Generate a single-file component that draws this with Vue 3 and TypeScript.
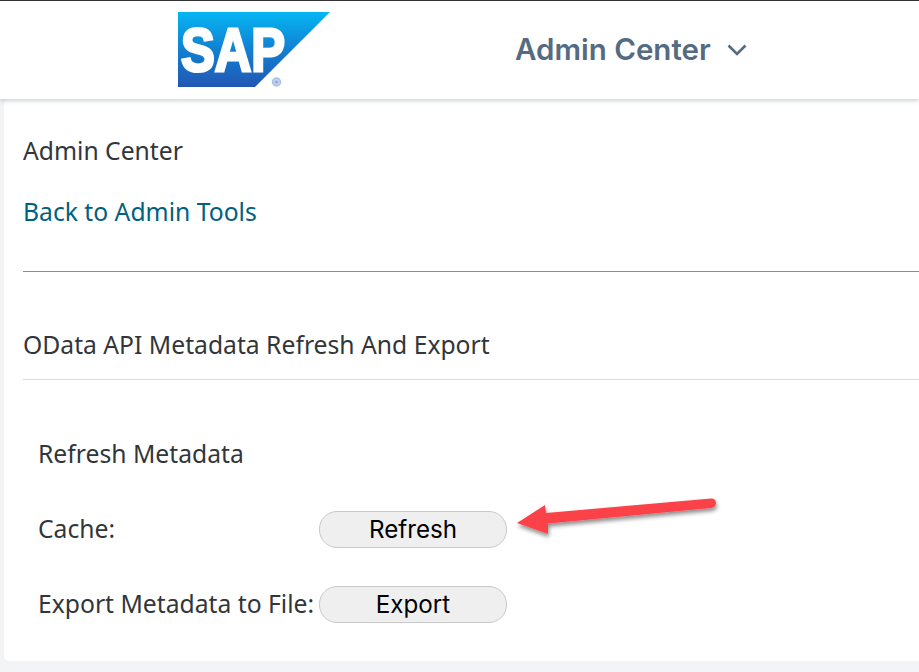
<script setup lang="ts">
const rows = [
  { label: 'Cache:', action: 'Refresh' },
  { label: 'Export Metadata to File:', action: 'Export' },
]
</script>

<template>
  <div class="page">
    <header class="topbar">
      <div class="logo">
        <svg class="logo-bg" width="152" height="76" viewBox="0 0 152 76">
          <defs>
            <linearGradient id="sapGrad" x1="0" y1="0" x2="0" y2="1">
              <stop offset="0" stop-color="#05b6f2" />
              <stop offset="0.5" stop-color="#1180d2" />
              <stop offset="1" stop-color="#2257b3" />
            </linearGradient>
          </defs>
          <polygon points="0,0 152,0 77,75 0,75" fill="url(#sapGrad)" />
          <circle cx="98.500" cy="70" r="4" fill="#c3d2ec" stroke="#a9c0e6" stroke-width="1.500" />
          <circle cx="98.500" cy="70" r="1.500" fill="#8faad9" />
        </svg>
        <span class="logo-text">SAP</span>
      </div>
      <div class="module">
        <span>Admin Center</span>
        <svg width="20" height="12" viewBox="0 0 20 12" class="chev">
          <path d="M1.5 1.5 L10 10 L18.5 1.5" fill="none" stroke="#556b82" stroke-width="2.6" />
        </svg>
      </div>
    </header>

    <main class="card">
      <div class="crumb">Admin Center</div>
      <a class="back">Back to Admin Tools</a>
      <hr class="rule-dark" />
      <h1 class="title">OData API Metadata Refresh And Export</h1>
      <hr class="rule-light" />
      <section class="panel">
        <h2 class="panel-title">Refresh Metadata</h2>
        <div v-for="row in rows" :key="row.action" class="row">
          <span class="label">{{ row.label }}</span>
          <button class="pill" type="button">{{ row.action }}</button>
        </div>
      </section>
    </main>

    <svg class="arrow" width="919" height="672" viewBox="0 0 919 672">
      <defs>
        <filter id="arrowShadow" x="-10%" y="-30%" width="120%" height="170%">
          <feDropShadow dx="1" dy="3" stdDeviation="2" flood-color="#000" flood-opacity="0.45" />
        </filter>
      </defs>
      <path
        d="M517 523 L545 505 L546 513 L711 498.500 Q716 498.500 716 503 Q716 507 711 508 L548 523.500 L548 534 Z"
        fill="#fb4349"
        filter="url(#arrowShadow)"
      />
    </svg>
  </div>
</template>

<style>
html, body { margin: 0; padding: 0; background: #f3f4f6; }
</style>

<style scoped>
.page {
  position: relative;
  width: 919px;
  height: 672px;
  overflow: hidden;
  background: #f3f4f6;
  font-family: "Noto Sans", "Open Sans", sans-serif;
  font-size: 24.7px;
  color: #32363a;
}
.topbar {
  position: relative;
  z-index: 1;
  box-sizing: border-box;
  height: 99px;
  display: flex;
  align-items: flex-start;
  background: #fff;
  border-top: 1px solid #333;
  box-shadow: 0 2px 4px rgba(90, 105, 120, 0.28);
}
.logo {
  position: relative;
  width: 152px;
  height: 75px;
  margin: 11px 0 0 178px;
}
.logo-bg { display: block; }
.logo-text {
  position: absolute;
  left: 3px;
  top: 8px;
  font-family: "Liberation Sans", sans-serif;
  font-size: 61px;
  line-height: 61px;
  font-weight: 700;
  letter-spacing: 0;
  color: #fff;
  -webkit-text-stroke: 3px #fff;
  transform: scaleX(0.83);
  transform-origin: left top;
  filter: blur(0.7px);
}
.module {
  display: flex;
  align-items: center;
  gap: 16px;
  margin: 28px 0 0 185px;
  font-family: Inter, sans-serif;
  font-size: 29.500px;
  line-height: 40px;
  font-weight: 600;
  color: #556b82;
}
.chev { margin-top: 2px; }
.card {
  box-sizing: border-box;
  height: 562px;
  margin-left: 4px;
  padding: 1px 0 0 19px;
  background: #fff;
  border-radius: 5px 0 0 5px;
}
.crumb {
  padding-top: 34px;
  line-height: 34px;
}
.back {
  display: block;
  margin-top: 27px;
  line-height: 34px;
  color: #00617f;
}
.rule-dark {
  margin: 42px 0 0;
  border: 0;
  border-top: 1px solid #8c8c8c;
}
.title {
  margin: 56px 0 0;
  font-size: inherit;
  line-height: 34px;
  font-weight: 400;
}
.rule-light {
  margin: 17px 0 0;
  border: 0;
  border-top: 1px solid #d9d9d9;
}
.panel { padding-left: 15px; }
.panel-title {
  margin: 57px 0 0;
  font-size: inherit;
  line-height: 34px;
  font-weight: 400;
}
.row {
  display: flex;
  align-items: center;
  height: 37px;
  margin-top: 38px;
}
.panel-title + .row { margin-top: 40px; }
.label {
  width: 281px;
  flex: none;
  line-height: 34px;
  margin-top: -2px;
  white-space: nowrap;
}
.pill {
  box-sizing: border-box;
  width: 188px;
  height: 37px;
  padding: 0;
  border: 1px solid #c8c8c8;
  border-radius: 18px;
  background: #efefef;
  color: #000;
  font-family: Inter, sans-serif;
  font-size: 24.2px;
  line-height: 35px;
}
.arrow {
  position: absolute;
  left: 0;
  top: 0;
  z-index: 2;
  pointer-events: none;
}
</style>
